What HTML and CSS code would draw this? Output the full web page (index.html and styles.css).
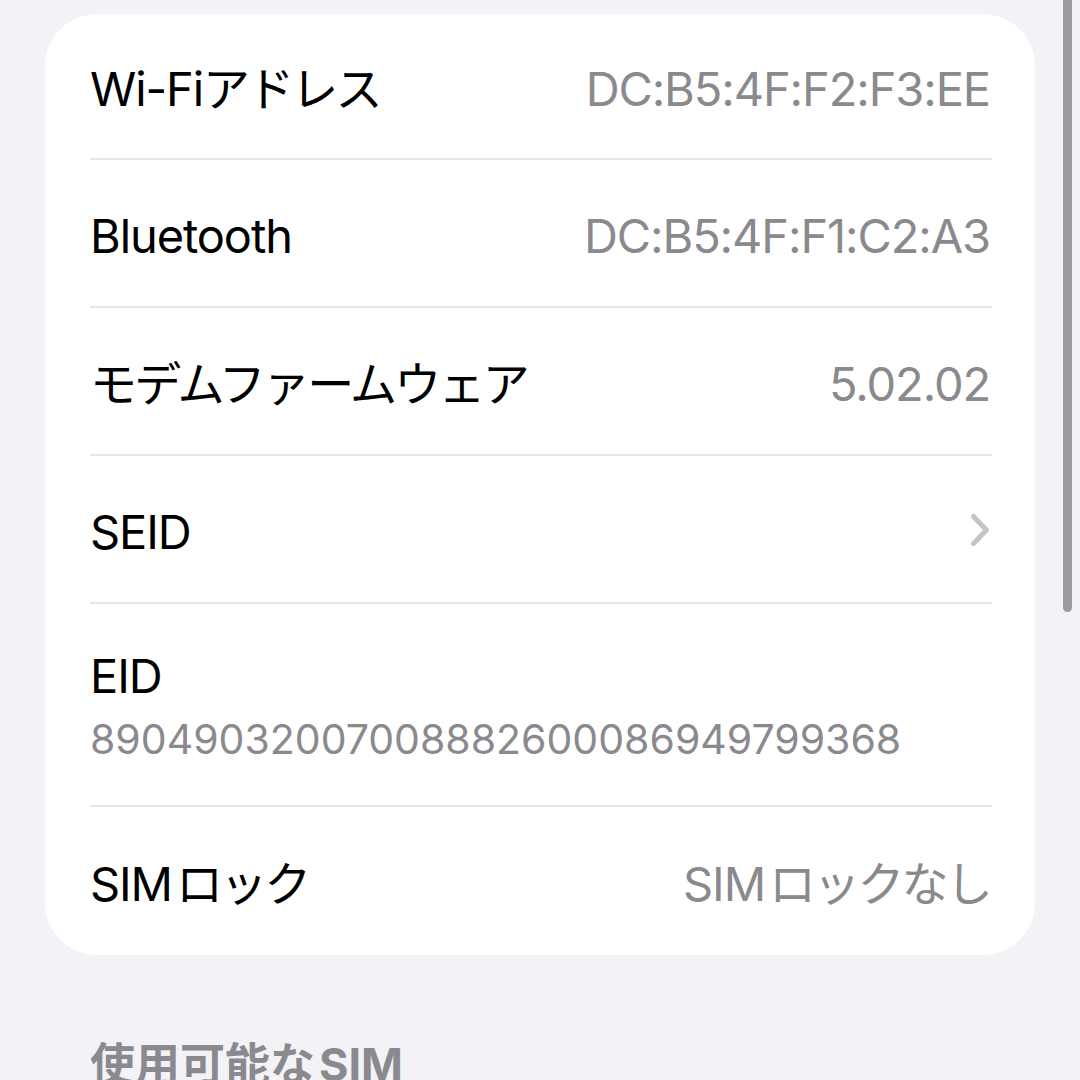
FILE: index.html
```html
<!DOCTYPE html>
<html lang="ja">
<head>
<meta charset="utf-8">
<link rel="stylesheet" href="styles.css">
</head>
<body>
<div class="screen">
  <div class="card">
    <div class="row">
      <div class="inner first">
        <span class="label">Wi-Fi<span class="ja">アドレス</span></span>
        <span class="value">DC:B5:4F:F2:F3:EE</span>
      </div>
    </div>
    <div class="row">
      <div class="inner">
        <span class="label">Bluetooth</span>
        <span class="value">DC:B5:4F:F1:C2:A3</span>
      </div>
    </div>
    <div class="row">
      <div class="inner">
        <span class="label"><span class="ja">モデムファームウェア</span></span>
        <span class="value">5.02.02</span>
      </div>
    </div>
    <div class="row">
      <div class="inner">
        <span class="label">SEID</span>
        <svg class="chevron" width="20" height="34" viewBox="0 0 20 34"><path d="M3.5 3.5 L16.5 17 L3.5 30.5" fill="none" stroke="#c4c4c7" stroke-width="5" stroke-linecap="round" stroke-linejoin="round"/></svg>
      </div>
    </div>
    <div class="row">
      <div class="inner stacked">
        <span class="label">EID</span>
        <span class="subvalue">89049032007008882600086949799368</span>
      </div>
    </div>
    <div class="row">
      <div class="inner last">
        <span class="label">SIM<span class="ja gap">ロック</span></span>
        <span class="value">SIM<span class="ja gap">ロックなし</span></span>
      </div>
    </div>
  </div>
  <div class="section-header">使用可能な<span class="gap">SIM</span></div>
  <div class="scrollbar"></div>
</div>
</body>
</html>
```

FILE: styles.css
```css
html, body {
  margin: 0;
  padding: 0;
  background: #f2f2f7;
}

.screen {
  position: relative;
  width: 1080px;
  height: 1080px;
  overflow: hidden;
  box-sizing: border-box;
  padding: 14px 45px 0 45px;
  font-family: "Inter", "Noto Sans CJK JP", sans-serif;
  -webkit-font-smoothing: antialiased;
}

.card {
  background: #ffffff;
  border-radius: 52px;
  overflow: hidden;
}

.row {
  padding-left: 45px;
}

.inner {
  display: flex;
  align-items: center;
  justify-content: space-between;
  box-sizing: border-box;
  height: 148px;
  padding-top: 6px;
  margin-right: 43px;
  padding-right: 2px;
  border-bottom: 2px solid #e6e6e9;
}

.inner.first {
  height: 146px;
}

.inner.last {
  border-bottom: none;
}

.inner.stacked {
  height: 203px;
  flex-direction: column;
  align-items: flex-start;
  justify-content: flex-start;
  padding-top: 44px;
}

.label {
  font-size: 47px;
  line-height: 56px;
  color: #000000;
  letter-spacing: -1.1px;
  white-space: nowrap;
}

.value {
  font-size: 47px;
  line-height: 56px;
  color: #8a8a8e;
  letter-spacing: -1.1px;
  white-space: nowrap;
}

.ja {
  letter-spacing: -2.8px;
}

.ja.gap {
  margin-left: 4px;
}

.subvalue {
  font-size: 41px;
  line-height: 50px;
  margin-top: 10px;
  color: #8a8a8e;
  letter-spacing: 0px;
  white-space: nowrap;
}

.chevron {
  display: block;
  margin-top: -4px;
}

.section-header {
  margin-top: 82px;
  padding-left: 45px;
  font-size: 45px;
  line-height: 56px;
  font-weight: 700;
  color: #8a8a8e;
  white-space: nowrap;
}

.section-header .gap {
  margin-left: 4px;
}

.scrollbar {
  position: absolute;
  left: 1063px;
  top: -10px;
  width: 9px;
  height: 622px;
  border-radius: 5px;
  background: #9a9a9f;
}
```
